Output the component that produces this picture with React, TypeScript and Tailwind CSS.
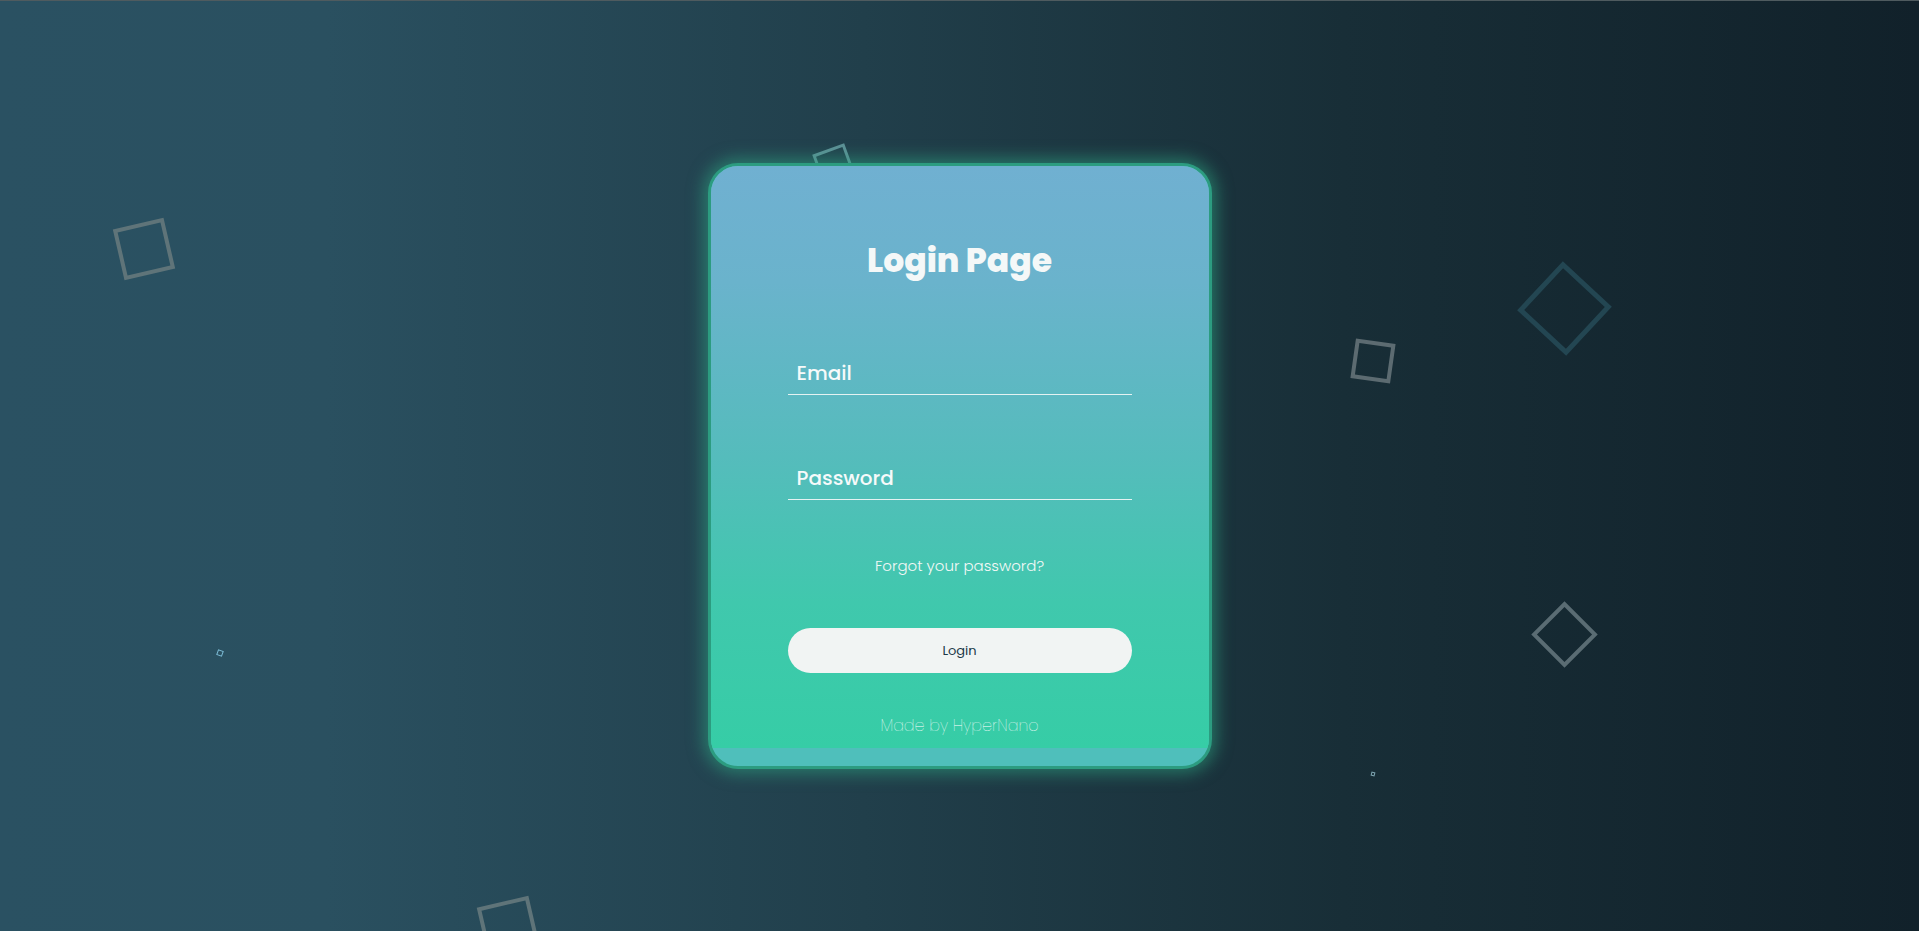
import React, { useState } from 'react';

const font = { fontFamily: 'Poppins, Inter, "Noto Sans", sans-serif' };

export default function App() {
  const [email, setEmail] = useState('');
  const [password, setPassword] = useState('');

  return (
    <div
      className="relative flex h-[931px] w-full items-center justify-center overflow-hidden border-t border-[#4f5b5f] bg-[linear-gradient(90deg,#2a5162_0%,#2a5060_17%,#213f4b_45%,#182e37_70%,#11212a_100%)]"
      style={font}
    >
      {/* floating squares */}
      <div className="absolute left-[118px] top-[222px] h-[52px] w-[52px] rotate-[-13deg] border-4 border-[#5f7479]" />
      <div className="absolute left-[817px] top-[147px] h-[34px] w-[34px] rotate-[-20deg] border-[3px] border-[#5d9096]" />
      <div className="absolute left-[1353px] top-[340px] h-[40px] w-[40px] rotate-[8deg] border-[4px] border-[#5c6b71]" />
      <div className="absolute left-[1531px] top-[274px] h-[67px] w-[67px] rotate-[43deg] border-[5px] border-[#234652]" />
      <div className="absolute left-[1541px] top-[610px] h-[47px] w-[47px] rotate-45 border-4 border-[#5a6c73]" />
      <div className="absolute left-[482px] top-[900px] h-[53px] w-[53px] rotate-[-13deg] border-4 border-[#5f7479]" />
      <div className="absolute left-[217px] top-[649px] h-[6px] w-[6px] rotate-[20deg] border border-[#7bbad4]" />
      <div className="absolute left-[1371px] top-[771px] h-[4px] w-[4px] rotate-[15deg] border border-[#7fa6b2]" />

      {/* card */}
      <div className="relative z-10 h-[606px] w-[504px] overflow-hidden rounded-[30px] border-[3px] border-[#2c9c80] bg-[#4fbfbb] shadow-[0_0_16px_5px_rgba(46,165,130,0.55)]">
        <form
          className="flex h-[582px] flex-col items-center bg-[linear-gradient(180deg,#70b0d1_0%,#6ab3cc_20%,#55bcbc_50%,#40c8ad_75%,#36cda6_100%)] pt-[77px]"
          onSubmit={(e) => e.preventDefault()}
        >
          <h1 className="text-[33px] font-extrabold leading-9 text-[#f4f8f8]">Login Page</h1>

          <input
            value={email}
            onChange={(e) => setEmail(e.target.value)}
            placeholder="Email"
            className="mt-[72px] h-[44px] w-[344px] border-b border-[#e4f2f2] bg-transparent pl-[9px] text-[20px] font-medium text-white outline-none placeholder:text-[#f6fafa]"
          />
          <input
            type="password"
            value={password}
            onChange={(e) => setPassword(e.target.value)}
            placeholder="Password"
            className="mt-[61px] h-[44px] w-[344px] border-b border-[#e4f2f2] bg-transparent pl-[9px] text-[20px] font-medium text-white outline-none placeholder:text-[#f6fafa]"
          />

          <a href="#" className="mt-[54px] text-[15px] font-light leading-6 text-[#f2f8f6]">
            Forgot your password?
          </a>

          <button
            type="submit"
            className="mt-[50px] h-[45px] w-[344px] rounded-full bg-[#f1f4f3] text-[13px] text-[#1c3848]"
          >
            Login
          </button>

          <p className="mt-[41px] text-[16px] font-extralight leading-6 text-white">Made by HyperNano</p>
        </form>
      </div>
    </div>
  );
}
